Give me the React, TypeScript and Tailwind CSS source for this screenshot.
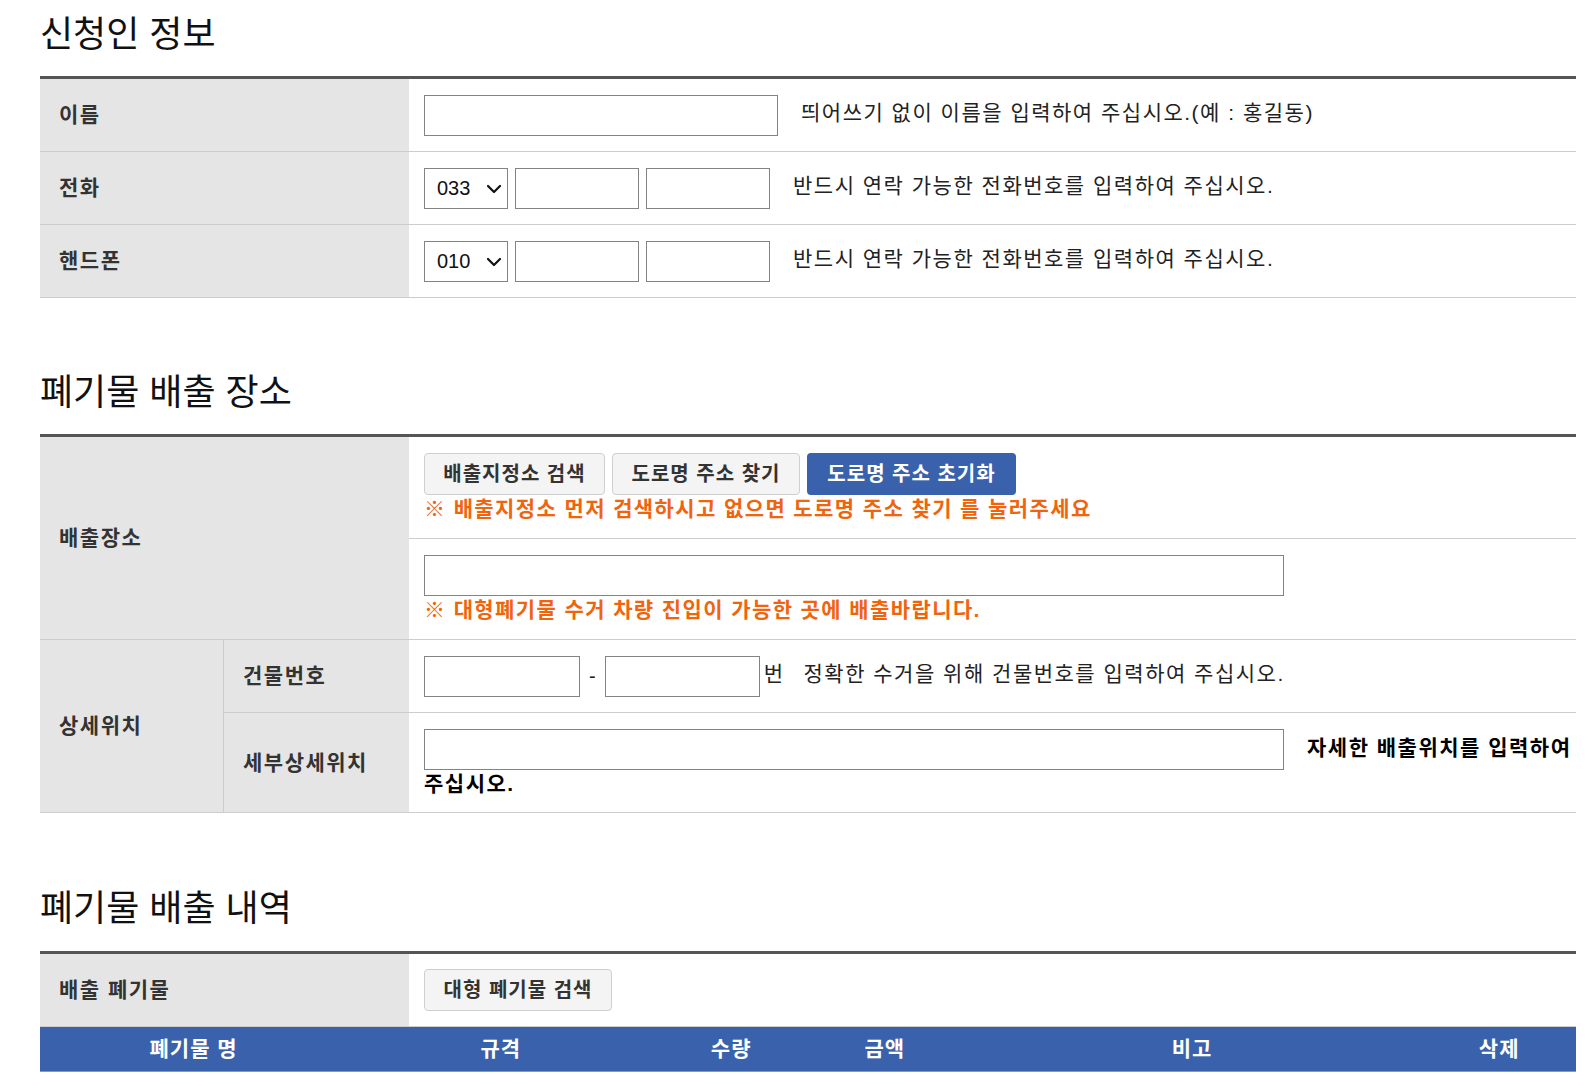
import { ChevronDown } from "lucide-react";

const TH = "bg-[#e5e5e5] flex items-center pl-[19px] text-[21px] tracking-[1.5px] font-bold text-[#333]";
const HELP = "text-[21px] tracking-[1.5px] text-[#222] mb-[5px]";
const NOTE = "text-[21px] tracking-[1.4px] leading-[28px] font-bold text-[#f0640e]";

function TextInput({ className = "" }: { className?: string }) {
  return (
    <input
      type="text"
      className={`h-[41px] border border-[#838383] bg-white px-2 text-[18px] outline-none ${className}`}
    />
  );
}

function AreaSelect({ value }: { value: string }) {
  return (
    <div className="relative w-[84px] h-[41px] shrink-0">
      <select
        defaultValue={value}
        className="appearance-none w-full h-full border border-[#838383] bg-white pl-[12px] text-[20px] text-[#111] outline-none"
      >
        <option>{value}</option>
      </select>
      <ChevronDown
        size={24}
        strokeWidth={2.2}
        className="absolute right-[2px] top-1/2 -translate-y-1/2 mt-[1px] pointer-events-none text-[#111]"
      />
    </div>
  );
}

function GrayButton({ children, className = "" }: { children: React.ReactNode; className?: string }) {
  return (
    <button
      type="button"
      className={`h-[42px] rounded-[4px] border border-[#cfcfcf] bg-[#f4f4f4] text-[20px] tracking-[1px] font-bold text-[#333] ${className}`}
    >
      {children}
    </button>
  );
}

function Title({ children, className = "" }: { children: React.ReactNode; className?: string }) {
  return (
    <h2 className={`text-[36px] leading-[44px] font-normal text-[#111] ${className}`}>
      {children}
    </h2>
  );
}

function PhoneRow({ label, code }: { label: string; code: string }) {
  return (
    <div className="flex h-[73px] border-b border-[#ccc]">
      <div className={`w-[369px] shrink-0 ${TH}`}>{label}</div>
      <div className="flex-1 flex items-center pl-[15px]">
        <AreaSelect value={code} />
        <TextInput className="w-[124px] ml-[7px]" />
        <TextInput className="w-[124px] ml-[7px]" />
        <span className={`${HELP} ml-[23px]`}>반드시 연락 가능한 전화번호를 입력하여 주십시오.</span>
      </div>
    </div>
  );
}

export default function App() {
  const headers = ["폐기물 명", "규격", "수량", "금액", "비고", "삭제"];

  return (
    <div className="min-h-screen bg-white pl-[40px] pr-[12px] pt-[11px] font-['Liberation_Sans','Noto_Sans_CJK_KR',sans-serif]">
      {/* 신청인 정보 */}
      <Title className="mt-[2px] mb-[19px]">신청인 정보</Title>
      <div className="border-t-[3px] border-[#555]">
        <div className="flex h-[73px] border-b border-[#ccc]">
          <div className={`w-[369px] shrink-0 ${TH}`}>이름</div>
          <div className="flex-1 flex items-center pl-[15px]">
            <TextInput className="w-[354px]" />
            <span className={`${HELP} ml-[23px]`}>띄어쓰기 없이 이름을 입력하여 주십시오.(예 : 홍길동)</span>
          </div>
        </div>
        <PhoneRow label="전화" code="033" />
        <PhoneRow label="핸드폰" code="010" />
      </div>

      {/* 폐기물 배출 장소 */}
      <Title className="mt-[73px] mb-[19px]">폐기물 배출 장소</Title>
      <div className="border-t-[3px] border-[#555]">
        <div className="flex border-b border-[#ccc]">
          <div className={`w-[369px] shrink-0 ${TH}`}>배출장소</div>
          <div className="flex-1">
            <div className="border-b border-[#ccc] pl-[15px] pt-[16px] pb-[15px]">
              <div className="flex gap-[7px]">
                <GrayButton className="w-[181px]">배출지정소 검색</GrayButton>
                <GrayButton className="w-[188px]">도로명 주소 찾기</GrayButton>
                <button
                  type="button"
                  className="w-[209px] h-[42px] rounded-[4px] bg-[#3a62ac] text-[20px] tracking-[1px] font-bold text-white"
                >
                  도로명 주소 초기화
                </button>
              </div>
              <p className={NOTE}>※ 배출지정소 먼저 검색하시고 없으면 도로명 주소 찾기 를 눌러주세요</p>
            </div>
            <div className="pl-[15px] pt-[16px] pb-[15px]">
              <TextInput className="w-[860px] block" />
              <p className={NOTE}>※ 대형폐기물 수거 차량 진입이 가능한 곳에 배출바랍니다.</p>
            </div>
          </div>
        </div>

        <div className="flex border-b border-[#ccc]">
          <div className={`w-[184px] shrink-0 border-r border-[#ccc] ${TH}`}>상세위치</div>
          <div className="flex-1">
            <div className="flex h-[73px] border-b border-[#ccc]">
              <div className={`w-[185px] shrink-0 ${TH}`}>건물번호</div>
              <div className="flex-1 flex items-center pl-[15px]">
                <TextInput className="w-[156px]" />
                <span className="text-[20px] text-[#222] mx-[9px]">-</span>
                <TextInput className="w-[155px]" />
                <span className={`${HELP} ml-[4px]`}>번</span>
                <span className={`${HELP} ml-[19px]`}>정확한 수거을 위해 건물번호를 입력하여 주십시오.</span>
              </div>
            </div>
            <div className="flex">
              <div className={`w-[185px] shrink-0 ${TH}`}>세부상세위치</div>
              <div className="flex-1 pl-[15px] pt-[16px] pb-[14px] text-[21px] tracking-[1.5px] leading-[28px] font-bold text-black break-keep">
                <TextInput className="w-[860px] align-middle mr-[23px]" />
                자세한 배출위치를 입력하여 주십시오.
              </div>
            </div>
          </div>
        </div>
      </div>

      {/* 폐기물 배출 내역 */}
      <Title className="mt-[74px] mb-[20px]">폐기물 배출 내역</Title>
      <div className="border-t-[3px] border-[#555]">
        <div className="flex h-[73px] border-b border-[#ccc]">
          <div className={`w-[369px] shrink-0 ${TH}`}>배출 폐기물</div>
          <div className="flex-1 flex items-center pl-[15px]">
            <GrayButton className="w-[188px]">대형 폐기물 검색</GrayButton>
          </div>
        </div>
        <div className="grid grid-cols-[20%_20%_10%_10%_30%_10%] h-[45px] items-center bg-[#3a62ac] border-b border-[#999] text-center text-[21px] tracking-[1px] font-bold text-white">
          {headers.map((h) => (
            <div key={h}>{h}</div>
          ))}
        </div>
      </div>
    </div>
  );
}
